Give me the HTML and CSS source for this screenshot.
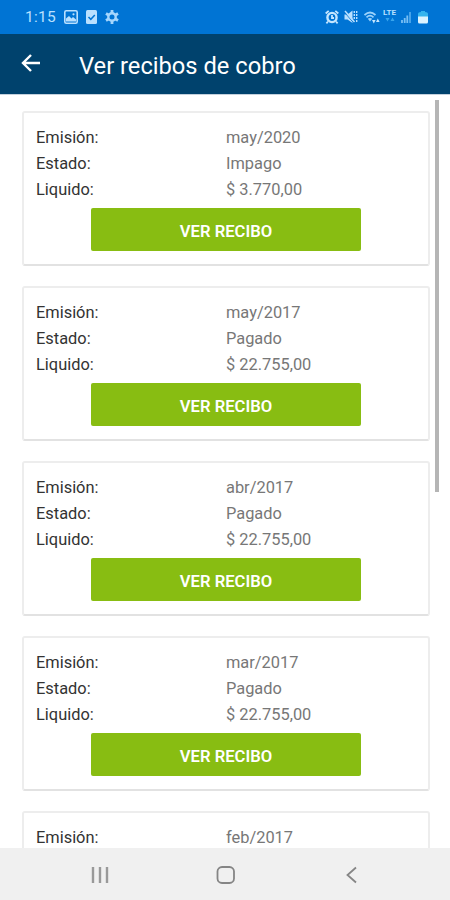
FILE: index.html
```html
<!DOCTYPE html>
<html lang="es">
<head>
    <meta charset="UTF-8">
    <meta name="viewport" content="width=device-width, initial-scale=1.0">
    <title>Ver recibos de cobro</title>

    <link rel="stylesheet" href="styles.css">
</head>
<body>

<div class="screen">
    <!-- Status bar -->
    <div class="status-bar">
        <span class="clock">1:15</span>
        <div class="status-left">
            <svg width="14" height="14" viewBox="0 0 14 14">
                <rect x="0.8" y="0.8" width="12.4" height="12.4" rx="1.5" fill="none" stroke="#b9e0ff" stroke-width="1.6"/>
                <path d="M2 11.5V8.5l3-2.5 2.500 2.500 1.500-1.500 3 2.500v2z" fill="#b9e0ff"/>
                <circle cx="9.500" cy="4.300" r="1.100" fill="#b9e0ff"/>
            </svg>
            <svg width="11" height="14" viewBox="0 0 11 14">
                <rect width="11" height="14" rx="1.500" fill="#b9e0ff"/>
                <path d="M2.500 7l2.300 2.300L8.800 5" fill="none" stroke="#0074d4" stroke-width="1.500"/>
            </svg>
            <svg width="14" height="14" viewBox="0 0 14 14">
                <circle cx="7" cy="7" r="3.700" fill="none" stroke="#a5d6fd" stroke-width="2.400"/>
                <path d="M7 0v3M7 11v3M1 3.500L3.500 5M10.500 9l2.500 1.500M1 10.500L3.500 9M10.500 5L13 3.500" stroke="#a5d6fd" stroke-width="2.800"/>
            </svg>
        </div>
        <div class="status-right">
            <svg width="14" height="14" viewBox="0 0 14 14">
                <circle cx="7" cy="7.500" r="4.600" fill="none" stroke="#c4e6ff" stroke-width="2.400"/>
                <path d="M7 5v3h2M0.700 3.500l3-2.700M13.300 3.500l-3-2.700M3 11.500l-1.600 1.800M11 11.500l1.600 1.800" fill="none" stroke="#c4e6ff" stroke-width="1.800"/>
            </svg>
            <svg width="14" height="14" viewBox="0 0 14 14">
                <path d="M0.500 4.500h3L8.500 0.500v12.500L3.500 9.500h-3z" fill="#b9e0ff"/>
                <path d="M0.500 2.300L9.300 12.500" stroke="#0074d4" stroke-width="0.900"/>
                <path d="M1 1L10.500 12" stroke="#b9e0ff" stroke-width="1.500"/>
                <path d="M10.300 1v9M12.700 1v12" stroke="#b9e0ff" stroke-width="1.400" stroke-dasharray="2 1"/>
            </svg>
            <svg class="wifi" width="16" height="14" viewBox="0 0 16 14">
                <path d="M0.500 5Q6 0 11.500 5M2.500 7.300Q6 4 9.500 7.300" fill="none" stroke="#9bd2fb" stroke-width="1.700"/>
                <path d="M3.800 8.800Q6 7 8.200 8.800L6 11.500z" fill="#9bd2fb"/>
                <path d="M8 10h3.600L9.800 13.500zM12 12h3.600L13.800 8.500z" fill="#c4e6ff"/>
            </svg>
            <div class="lte">
                <span>LTE</span>
                <svg width="10" height="5" viewBox="0 0 10 5">
                    <path d="M0.500 1h4L2.500 4.500zM5.500 4h4L7.500 0.500z" fill="#38a5ec"/>
                </svg>
            </div>
            <svg width="10" height="12" viewBox="0 0 10 12">
                <path d="M1 9v3M3.700 7v5M6.300 4.500V12" stroke="#79bff4" stroke-width="1.800"/>
                <path d="M9 1v11" stroke="#4fa9eb" stroke-width="1.800"/>
            </svg>
            <svg class="battery" width="10" height="14" viewBox="0 0 10 14">
                <path d="M0 7V4Q0 2 3 2V1h4v1q3 0 3 2v3z" fill="#35b4ee"/>
                <path d="M0 6.500h10V12q0 1.500-1.500 1.500h-7Q0 13.500 0 12z" fill="#dcf3ff"/>
            </svg>
        </div>
    </div>

    <!-- App bar -->
    <div class="app-bar">
        <svg class="back" width="20" height="20" viewBox="0 0 20 20">
            <path d="M19 10H2.500M10 2L2 10l8 8" fill="none" stroke="#fff" stroke-width="2.400"/>
        </svg>
        <h1>Ver recibos de cobro</h1>
    </div>

    <!-- Receipts -->
    <div class="content">
        <div class="receipts">
            <div class="card">
                <div class="row"><span class="label">Emisión:</span><span class="value">may/2020</span></div>
                <div class="row"><span class="label">Estado:</span><span class="value">Impago</span></div>
                <div class="row"><span class="label">Liquido:</span><span class="value">$ 3.770,00</span></div>
                <button type="button">VER RECIBO</button>
            </div>
            <div class="card">
                <div class="row"><span class="label">Emisión:</span><span class="value">may/2017</span></div>
                <div class="row"><span class="label">Estado:</span><span class="value">Pagado</span></div>
                <div class="row"><span class="label">Liquido:</span><span class="value">$ 22.755,00</span></div>
                <button type="button">VER RECIBO</button>
            </div>
            <div class="card">
                <div class="row"><span class="label">Emisión:</span><span class="value">abr/2017</span></div>
                <div class="row"><span class="label">Estado:</span><span class="value">Pagado</span></div>
                <div class="row"><span class="label">Liquido:</span><span class="value">$ 22.755,00</span></div>
                <button type="button">VER RECIBO</button>
            </div>
            <div class="card">
                <div class="row"><span class="label">Emisión:</span><span class="value">mar/2017</span></div>
                <div class="row"><span class="label">Estado:</span><span class="value">Pagado</span></div>
                <div class="row"><span class="label">Liquido:</span><span class="value">$ 22.755,00</span></div>
                <button type="button">VER RECIBO</button>
            </div>
            <div class="card">
                <div class="row"><span class="label">Emisión:</span><span class="value">feb/2017</span></div>
            </div>
        </div>
        <div class="scrollbar"></div>
    </div>

    <!-- Navigation bar -->
    <div class="nav-bar">
        <svg width="18" height="18" viewBox="0 0 18 18">
            <path d="M2 1v16M9 1v16M16 1v16" stroke="#999" stroke-width="2.400"/>
        </svg>
        <svg width="20" height="20" viewBox="0 0 20 20">
            <rect x="1.500" y="2" width="16.500" height="16" rx="4.500" fill="none" stroke="#858585" stroke-width="1.800"/>
        </svg>
        <svg width="18" height="18" viewBox="0 0 18 18">
            <path d="M13 1.500L4.500 9l8.500 7.500" fill="none" stroke="#858585" stroke-width="1.800"/>
        </svg>
    </div>
</div>

</body>
</html>
```

FILE: styles.css
```css
body {
    margin: 0;
    font-family: Roboto, sans-serif;
    background-color: white;
}
.screen {
    display: flex;
    flex-direction: column;
    width: 450px;
    height: 900px;
    overflow: hidden;
}
svg {
    display: block;
    flex: none;
}
.status-bar {
    display: flex;
    align-items: center;
    flex: none;
    box-sizing: border-box;
    height: 34px;
    padding: 0 22px 1px 25px;
    background-color: #0074d4;
}
.clock {
    width: 39px;
    font-size: 15.5px;
    letter-spacing: 0.3px;
    color: #b9e0ff;
}
.status-left {
    display: flex;
    align-items: center;
    gap: 8px;
}
.status-right {
    display: flex;
    align-items: center;
    gap: 5px;
    margin-left: auto;
}
.wifi {
    margin-left: 1px;
}
.lte {
    display: flex;
    flex-direction: column;
    align-items: center;
    width: 13px;
    margin: 0 0 3px -2px;
}
.lte span {
    font-size: 8px;
    font-weight: 700;
    line-height: 9px;
    color: #b9e0ff;
}
.battery {
    margin-left: 2px;
}
.app-bar {
    display: flex;
    align-items: center;
    flex: none;
    box-sizing: border-box;
    height: 61px;
    padding: 0 20px 0 21px;
    background-color: #00426d;
    border-bottom: 1px solid #c3d0dc;
}
.back {
    margin-bottom: 2px;
}
h1 {
    margin: 3px 0 0 38px;
    font-size: 23.7px;
    font-weight: 400;
    color: white;
}
.content {
    display: flex;
    flex: 1;
    min-height: 0;
    overflow: hidden;
}
.receipts {
    display: flex;
    flex-direction: column;
    gap: 20px;
    width: 408px;
    padding: 16px 5px 0 22px;
}
.card {
    flex: none;
    box-sizing: border-box;
    height: 155px;
    padding: 12px 12px 0;
    border: 2px solid #ededed;
    border-bottom-color: #e2e2e2;
    border-radius: 3px;
}
.row {
    display: flex;
    height: 26.2px;
    font-size: 16.4px;
    line-height: 26.2px;
}
.label {
    width: 190px;
    color: #333;
}
.value {
    color: #777;
}
button {
    display: block;
    width: 270px;
    height: 43px;
    margin: 4.4px 0 0 55px;
    padding: 4px 0 0;
    font-family: inherit;
    font-size: 16.6px;
    font-weight: 600;
    color: white;
    background-color: #88bd12;
    border: none;
    border-radius: 2px;
}
.scrollbar {
    width: 4px;
    height: 392px;
    margin-top: 5px;
    background-color: #b5b5b5;
}
.nav-bar {
    display: flex;
    align-items: center;
    justify-content: space-between;
    flex: none;
    box-sizing: border-box;
    height: 52px;
    padding: 2px 89px 0 91px;
    background-color: #f0f0f0;
}
```
